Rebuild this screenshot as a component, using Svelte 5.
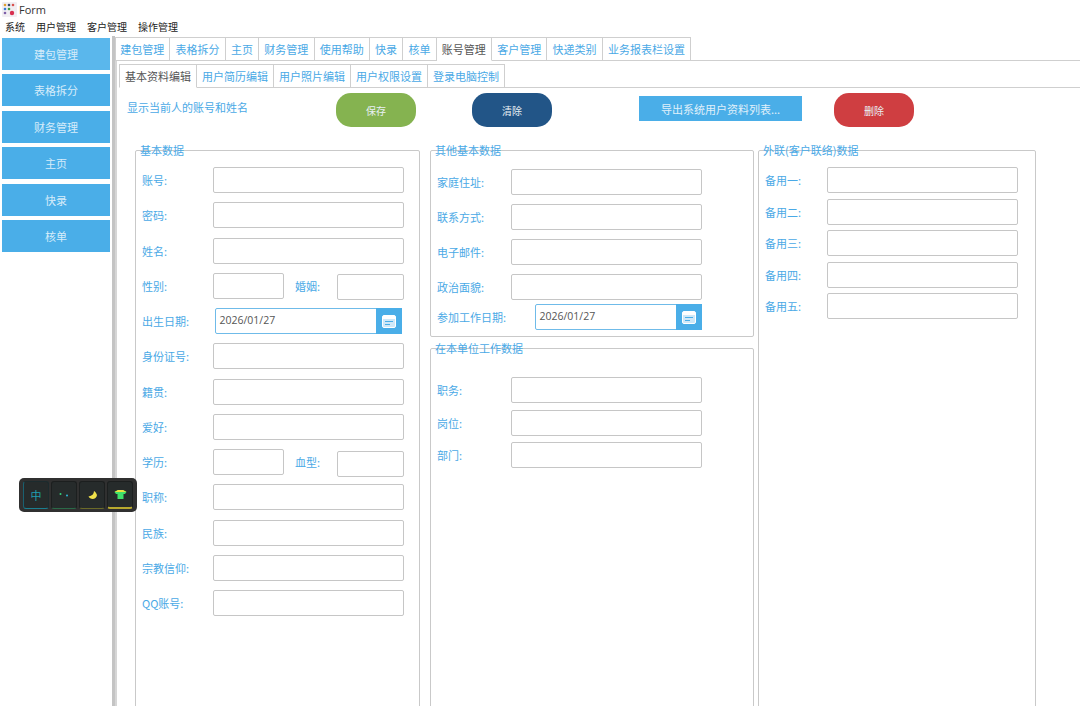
<script>
	const menus = ['系统', '用户管理', '客户管理', '操作管理'];
	const sideItems = ['建包管理', '表格拆分', '财务管理', '主页', '快录', '核单'];
	const topTabs = ['建包管理', '表格拆分', '主页', '财务管理', '使用帮助', '快录', '核单', '账号管理', '客户管理', '快递类别', '业务报表栏设置'];
	const subTabs = ['基本资料编辑', '用户简历编辑', '用户照片编辑', '用户权限设置', '登录电脑控制'];

	const basicRows = [
		{ label: '账号:' },
		{ label: '密码:' },
		{ label: '姓名:' },
		{ label: '性别:', second: '婚姻:' },
		{ label: '出生日期:', date: '2026/01/27' },
		{ label: '身份证号:' },
		{ label: '籍贯:' },
		{ label: '爱好:' },
		{ label: '学历:', second: '血型:' },
		{ label: '职称:' },
		{ label: '民族:' },
		{ label: '宗教信仰:' },
		{ label: 'QQ账号:' }
	];
	const otherRows = ['家庭住址:', '联系方式:', '电子邮件:', '政治面貌:'];
	const workRows = ['职务:', '岗位:', '部门:'];
	const spareRows = ['备用一:', '备用二:', '备用三:', '备用四:', '备用五:'];
</script>

<div class="form">
	<header class="titlebar">
		<svg class="logo" width="15" height="15" viewBox="0 0 15 15">
			<rect width="15" height="15" rx="1" fill="#f1eef2" />
			<circle cx="3" cy="3" r="1.300" fill="#e0a030" />
			<circle cx="7" cy="3" r="1.300" fill="#3b4a6b" />
			<circle cx="11" cy="3" r="1.300" fill="#d9534f" />
			<circle cx="3" cy="7" r="1.300" fill="#3a7bd5" />
			<circle cx="7" cy="7" r="1.300" fill="#45a049" />
			<circle cx="3" cy="11" r="1.300" fill="#7d5fa8" />
			<circle cx="10" cy="11" r="2.200" fill="#d83050" />
		</svg>
		<span>Form</span>
	</header>

	<nav class="menubar">
		{#each menus as menu}
			<span>{menu}</span>
		{/each}
	</nav>

	<div class="body">
		<aside class="sidebar">
			{#each sideItems as item}
				<button class="side-btn">{item}</button>
			{/each}
		</aside>

		<div class="splitter"></div>

		<main class="main">
			<div class="tabs top-tabs">
				{#each topTabs as tab}
					<span class="tab" class:active={tab === '账号管理'}>{tab}</span>
				{/each}
			</div>

			<div class="panel">
				<div class="tabs sub-tabs">
					{#each subTabs as tab, i}
						<span class="tab" class:active={i === 0}>{tab}</span>
					{/each}
				</div>

				<div class="toolbar">
					<span class="current-user">显示当前人的账号和姓名</span>
					<button class="pill green">保存</button>
					<button class="pill navy">清除</button>
					<button class="export">导出系统用户资料列表...</button>
					<button class="pill red">删除</button>
				</div>

				<div class="columns">
					<section class="group basic">
						<h3>基本数据</h3>
						<div class="rows">
							{#each basicRows as row}
								<div class="row">
									<label>{row.label}</label>
									{#if row.second}
										<span class="input small"></span>
										<label class="second">{row.second}</label>
										<span class="input tiny"></span>
									{:else if row.date}
										<span class="date">
											<span class="date-value">{row.date}</span>
											<span class="date-btn">
												<svg width="14" height="13" viewBox="0 0 14 13">
													<rect x="0.5" y="0.5" width="13" height="12" rx="1.500" fill="#cfe8f8" stroke="#fff" />
													<rect x="1" y="1" width="12" height="3" fill="#fff" />
													<path d="M3 6.500h8M3 9.500h5" stroke="#4aaee8" stroke-width="1" />
												</svg>
											</span>
										</span>
									{:else}
										<span class="input"></span>
									{/if}
								</div>
							{/each}
						</div>
					</section>

					<div class="middle">
						<section class="group other">
							<h3>其他基本数据</h3>
							<div class="rows">
								{#each otherRows as label}
									<div class="row">
										<label>{label}</label>
										<span class="input"></span>
									</div>
								{/each}
								<div class="row joined">
									<label>参加工作日期:</label>
									<span class="date">
										<span class="date-value">2026/01/27</span>
										<span class="date-btn">
											<svg width="14" height="13" viewBox="0 0 14 13">
												<rect x="0.5" y="0.5" width="13" height="12" rx="1.500" fill="#cfe8f8" stroke="#fff" />
												<rect x="1" y="1" width="12" height="3" fill="#fff" />
												<path d="M3 6.500h8M3 9.500h5" stroke="#4aaee8" stroke-width="1" />
											</svg>
										</span>
									</span>
								</div>
							</div>
						</section>

						<section class="group work">
							<h3>在本单位工作数据</h3>
							<div class="rows">
								{#each workRows as label}
									<div class="row">
										<label>{label}</label>
										<span class="input"></span>
									</div>
								{/each}
							</div>
						</section>
					</div>

					<section class="group spare">
						<h3>外联(客户联络)数据</h3>
						<div class="rows">
							{#each spareRows as label}
								<div class="row">
									<label>{label}</label>
									<span class="input"></span>
								</div>
							{/each}
						</div>
					</section>
				</div>
			</div>
		</main>
	</div>

	<!-- floating IME bar, sits over the form -->
	<div class="ime">
		<span class="key k1">中</span>
		<span class="key k2">
			<svg width="12" height="8" viewBox="0 0 12 8"><circle cx="2.500" cy="3" r="1" fill="#35d07a" /><circle cx="9" cy="4.500" r="1" fill="#2fb8d8" /></svg>
		</span>
		<span class="key k3">
			<svg width="11" height="11" viewBox="0 0 11 11"><path d="M7 1c0 3-2 5-5.500 5.500C3 10 9.500 10 10 5 9.500 3.500 8.500 2 7 1z" fill="#efe04a" /></svg>
		</span>
		<span class="key k4">
			<svg width="13" height="11" viewBox="0 0 13 11"><path d="M4 1h5l3.500 2-1.500 2H9.500v5h-6V5H2L.5 3z" fill="#3fe06a" /><path d="M4 1h5l3.500 2H.5z" fill="#e8e040" /></svg>
		</span>
	</div>
</div>

<style>
	:global(body) {
		background: #fff;
		overflow: hidden;
	}

	.form {
		position: relative;
		width: 1080px;
		height: 706px;
		overflow: hidden;
		background: #fff;
		font-family: 'Noto Sans CJK SC', 'Noto Sans', sans-serif;
		font-size: 11px;
		color: #4aa9e6;
	}

	.titlebar {
		display: flex;
		align-items: center;
		gap: 2px;
		height: 19px;
		padding-left: 2px;
		font-family: 'Open Sans', sans-serif;
		font-size: 11px;
		color: #333;
	}

	.menubar {
		display: flex;
		gap: 11px;
		height: 17px;
		padding-left: 5px;
		line-height: 16px;
		font-size: 10px;
		color: #222;
	}

	.body {
		display: flex;
		height: 670px;
	}

	.sidebar {
		display: flex;
		flex-direction: column;
		gap: 4.4px;
		width: 110px;
		padding: 2px 0 0 2px;
		box-sizing: border-box;
	}

	.side-btn {
		width: 108px;
		height: 32px;
		border: none;
		padding: 0;
		background: #4aaee8;
		color: #d6ecfa;
		font: inherit;
		font-size: 11px;
	}

	.side-btn:first-child {
		background: #5ab7ec;
	}

	.splitter {
		width: 3px;
		margin-left: 2px;
		background: #c4c4c4;
	}

	.main {
		flex: 1;
		min-width: 0;
	}

	.tabs {
		display: flex;
		align-items: flex-end;
		border-bottom: 1px solid #cfcfcf;
	}

	.top-tabs {
		height: 24px;
	}

	.top-tabs .tab {
		padding: 0 5.200px;
	}

	.top-tabs .tab:first-child {
		padding-left: 4.200px;
	}

	.panel {
		height: 646px;
		padding-left: 2px;
		border-left: 2px solid #d6d6d6;
	}

	.sub-tabs {
		height: 22px;
		padding-top: 4px;
	}

	.tab {
		display: flex;
		align-items: center;
		height: 24px;
		padding: 0 5px;
		box-sizing: border-box;
		margin-bottom: -1px;
		border: 1px solid #cfcfcf;
		border-left: none;
		font-size: 11px;
	}

	.tab:first-child {
		border-left: 1px solid #cfcfcf;
	}

	.tab.active {
		color: #555;
		border-bottom-color: #fff;
	}

	.toolbar {
		display: flex;
		align-items: flex-start;
		height: 34px;
		margin: 5px 0 0 8px;
	}

	.current-user {
		width: 209px;
		line-height: 28px;
		font-size: 11px;
	}

	.pill {
		width: 80px;
		height: 34px;
		border: none;
		padding: 0;
		border-radius: 15px;
		font: inherit;
		font-size: 10px;
		color: #e8f0f4;
	}

	.green {
		background: #85b350;
	}

	.navy {
		margin-left: 56px;
		background: #225587;
	}

	.red {
		margin-left: 32px;
		background: #cf3e41;
	}

	.export {
		width: 163px;
		height: 25px;
		margin: 3px 0 0 87px;
		border: none;
		padding: 0;
		background: #4aaee8;
		color: #e0f0fa;
		font: inherit;
		font-size: 11px;
	}

	.columns {
		display: flex;
		align-items: flex-start;
		margin: 23px 0 0 16px;
	}

	.group {
		box-sizing: border-box;
		border: 1px solid #c9c9c9;
		border-radius: 2px;
	}

	.group h3 {
		margin: -8px 0 0 4px;
		height: 15px;
		line-height: 15px;
		font-size: 11px;
		font-weight: 400;
	}

	.basic {
		width: 285px;
		height: 580px;
	}

	.basic .rows {
		margin-top: 9px;
	}

	.row {
		display: flex;
		align-items: center;
		height: 26px;
	}

	.rows {
		display: flex;
		flex-direction: column;
		gap: 9.250px;
		padding-left: 6px;
	}

	label {
		width: 71px;
		flex: none;
		font-size: 11px;
	}

	.input {
		width: 191px;
		height: 26px;
		box-sizing: border-box;
		border: 1px solid #c6c6c6;
		border-radius: 2px;
		background: #fff;
	}

	.input.small {
		width: 71px;
	}

	label.second {
		width: 42px;
		margin-left: 11px;
	}

	.input.tiny {
		width: 67px;
		margin-top: 3px;
	}

	.date {
		display: flex;
		width: 187px;
		height: 26px;
		margin-left: 2px;
		box-sizing: border-box;
		border: 1px solid #6fbbe9;
		border-radius: 2px;
	}

	.date-value {
		flex: 1;
		padding-left: 3.500px;
		line-height: 23px;
		font-family: 'Open Sans', sans-serif;
		font-size: 10.500px;
		color: #555;
	}

	.date-btn {
		display: flex;
		align-items: center;
		justify-content: center;
		width: 26px;
		margin: -1px;
		background: #4aaee8;
	}

	.middle {
		display: flex;
		flex-direction: column;
		gap: 11px;
		width: 324px;
		margin-left: 10px;
	}

	.other {
		height: 187px;
	}

	.other .rows {
		margin-top: 11px;
		gap: 9px;
	}

	.other label,
	.work label {
		width: 74px;
	}

	.other .joined {
		margin-top: -5px;
	}

	.other .joined label {
		width: 97px;
	}

	.joined .date {
		width: 167px;
		margin-left: 1px;
	}

	.work {
		height: 400px;
	}

	.work .rows {
		margin-top: 21px;
		gap: 6.500px;
	}

	.spare {
		width: 278px;
		height: 580px;
		margin-left: 4px;
	}

	.spare .rows {
		margin-top: 9px;
		gap: 5.500px;
	}

	.spare label {
		width: 62px;
	}

	.ime {
		position: absolute;
		left: 19px;
		top: 478px;
		display: flex;
		gap: 2px;
		padding: 3px 4px;
		width: 118px;
		height: 34px;
		box-sizing: border-box;
		border-radius: 5px;
		background: #303030;
	}

	.key {
		display: flex;
		align-items: center;
		justify-content: center;
		flex: 1;
		box-sizing: border-box;
		border: 1px solid #1c1f1f;
		border-radius: 3px;
		background: #262b2b;
		color: #1f9fb0;
		font-size: 11px;
	}

	.k1 {
		border-color: #1c2b2e #1c2b2e #1a7f90 #1a6070;
	}

	.k2 {
		border-bottom-color: #2a6a48;
	}

	.k3 {
		border-bottom-color: #6a6a28;
	}

	.k4 {
		border-bottom: 2px solid #b8a92e;
	}
</style>
